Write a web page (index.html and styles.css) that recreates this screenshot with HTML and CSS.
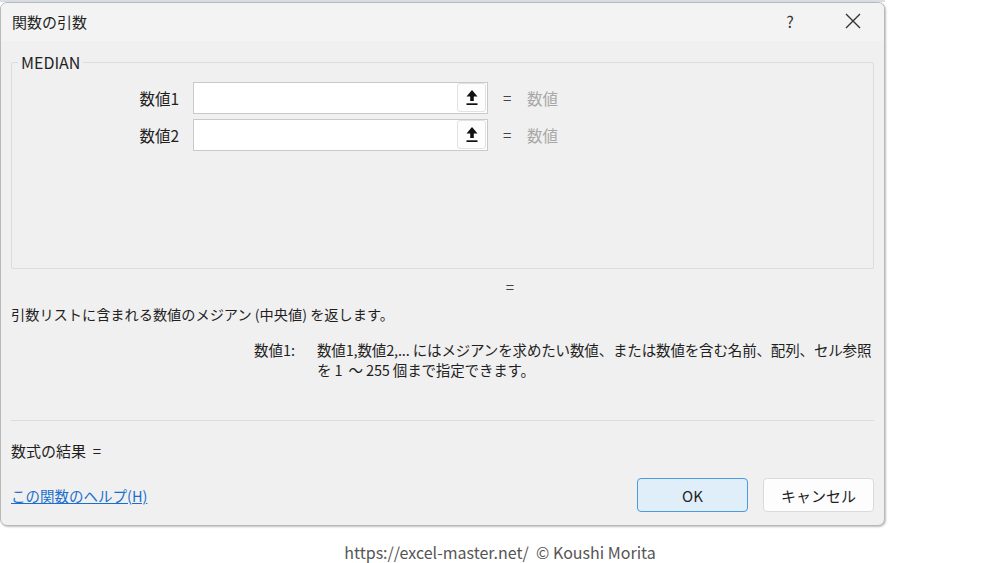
FILE: index.html
```html
<!DOCTYPE html>
<html lang="ja">
<head>
    <meta charset="UTF-8">
    <meta name="viewport" content="width=device-width, initial-scale=1.0">
    <title>関数の引数</title>
    <link rel="stylesheet" href="styles.css">
</head>
<body>
    <div class="sheet"></div>
    <div class="dialog">
        <div class="titlebar">
            <div class="title">関数の引数</div>
            <div class="help">?</div>
            <div class="close">
                <svg width="16" height="16" viewBox="0 0 16 16"><path d="M1 1 L15 15 M15 1 L1 15" stroke="#333" stroke-width="1.4" fill="none"/></svg>
            </div>
        </div>

        <div class="content">
            <fieldset class="group">
                <legend>MEDIAN</legend>
                <div class="arg">
                    <label>数値1</label>
                    <div class="input">
                        <span class="ref">
                            <svg width="12" height="17" viewBox="0 0 12 17"><path d="M6 1 L11.5 7.5 L7.8 7.5 L7.8 12 L4.2 12 L4.2 7.5 L0.5 7.5 Z" fill="#111"/><rect x="0.5" y="14.3" width="11" height="1.7" fill="#111"/></svg>
                        </span>
                    </div>
                    <span class="eq">=</span>
                    <span class="val">数値</span>
                </div>
                <div class="arg">
                    <label>数値2</label>
                    <div class="input">
                        <span class="ref">
                            <svg width="12" height="17" viewBox="0 0 12 17"><path d="M6 1 L11.5 7.5 L7.8 7.5 L7.8 12 L4.2 12 L4.2 7.5 L0.5 7.5 Z" fill="#111"/><rect x="0.5" y="14.3" width="11" height="1.7" fill="#111"/></svg>
                        </span>
                    </div>
                    <span class="eq">=</span>
                    <span class="val">数値</span>
                </div>
            </fieldset>

            <div class="result-eq">=</div>
            <p class="desc">引数リストに含まれる数値のメジアン (中央値) を返します。</p>

            <div class="argdesc">
                <span class="argname">数値1:</span>
                <span class="argtext">数値1,数値2,... にはメジアンを求めたい数値、または数値を含む名前、配列、セル参照<br>を&nbsp;1&nbsp; ～&nbsp;255&nbsp;個まで指定できます。</span>
            </div>

            <hr class="sep">

            <div class="formula">数式の結果&nbsp; =</div>

            <div class="footer">
                <a class="helplink" href="#">この関数のヘルプ(H)</a>
                <div class="buttons">
                    <button class="btn ok">OK</button>
                    <button class="btn">キャンセル</button>
                </div>
            </div>
        </div>
    </div>

    <div class="credit">https://excel-master.net/&nbsp; © Koushi Morita</div>
</body>
</html>
```

FILE: styles.css
```css
*{
    margin: 0;
    padding: 0;
    box-sizing: border-box;
}

body{
    width: 1000px;
    height: 563px;
    background: #fff;
    font-family: "Noto Sans CJK JP", "Noto Sans", sans-serif;
    font-size: 15px;
    color: #1f1f1f;
    overflow: hidden;
}

.sheet{
    width: 885px;
    height: 2px;
    background: #d9dee8;
}

.dialog{
    width: 885px;
    height: 524px;
    background: #f0f0f0;
    border: 1px solid #b9b9b9;
    border-radius: 7px;
    box-shadow: 1px 1px 2px rgba(0, 0, 0, 0.25);
    overflow: hidden;
}

.titlebar{
    height: 38px;
    display: flex;
    align-items: center;
    background: #f3f3f3;
    padding-left: 11px;
}

.title{
    flex: 1;
    font-size: 15px;
    margin-top: -2px;
}

.help{
    width: 30px;
    text-align: center;
    font-size: 16px;
    color: #333;
    margin-right: 33px;
    margin-top: -2px;
}

.close{
    width: 30px;
    display: flex;
    justify-content: center;
    margin-right: 16px;
    margin-top: -2px;
}

.content{
    padding: 0 10px;
}

.group{
    border: 1px solid #dcdcdc;
    border-radius: 2px;
    height: 216px;
    padding: 8px 0 0 0;
    margin-top: 12px;
}

.group legend{
    margin-left: 6px;
    padding: 0 3px;
    font-size: 16px;
    line-height: 18px;
}

.arg{
    display: flex;
    align-items: center;
    height: 37px;
}

.arg label{
    width: 181px;
    text-align: right;
    padding-right: 14px;
    font-size: 15.5px;
}

.input{
    width: 295px;
    height: 32px;
    background: #fff;
    border: 1px solid #c9c9c9;
    display: flex;
    justify-content: flex-end;
    align-items: center;
}

.ref{
    width: 29px;
    height: 29px;
    margin-right: 1px;
    border: 1px solid #e2e2e2;
    border-radius: 3px;
    background: #fdfdfd;
    display: flex;
    justify-content: center;
    align-items: center;
}

.eq{
    margin-left: 15px;
    width: 24px;
    color: #444;
}

.val{
    color: #a8a8a8;
    font-size: 15.5px;
}

.result-eq{
    text-align: right;
    padding-right: 360px;
    margin-top: 8px;
    line-height: 20px;
    color: #444;
}

.desc{
    margin-top: 6px;
    line-height: 22px;
    font-size: 14.2px;
}

.argdesc{
    display: flex;
    margin-top: 15px;
    padding-left: 243px;
    line-height: 20px;
    font-size: 14.5px;
    white-space: nowrap;
}

.argname{
    width: 63px;
    flex-shrink: 0;
}

.argtext{
    letter-spacing: -0.15px;
}

.sep{
    border: none;
    border-top: 1px solid #dcdcdc;
    margin-top: 40px;
}

.formula{
    margin-top: 19px;
    line-height: 22px;
}

.footer{
    display: flex;
    justify-content: space-between;
    align-items: center;
    margin-top: 16px;
}

.helplink{
    color: #1a6fce;
    text-decoration: underline;
    font-size: 14.5px;
}

.buttons{
    display: flex;
    gap: 15px;
}

.btn{
    width: 111px;
    height: 34px;
    font-family: inherit;
    font-size: 15px;
    color: #1f1f1f;
    background: #fdfdfd;
    border: 1px solid #dadada;
    border-radius: 4px;
}

.btn.ok{
    background: #e0eef9;
    border: 1px solid #4c9ae0;
}

.credit{
    margin-top: 14px;
    text-align: center;
    font-size: 16px;
    color: #555;
}
```
